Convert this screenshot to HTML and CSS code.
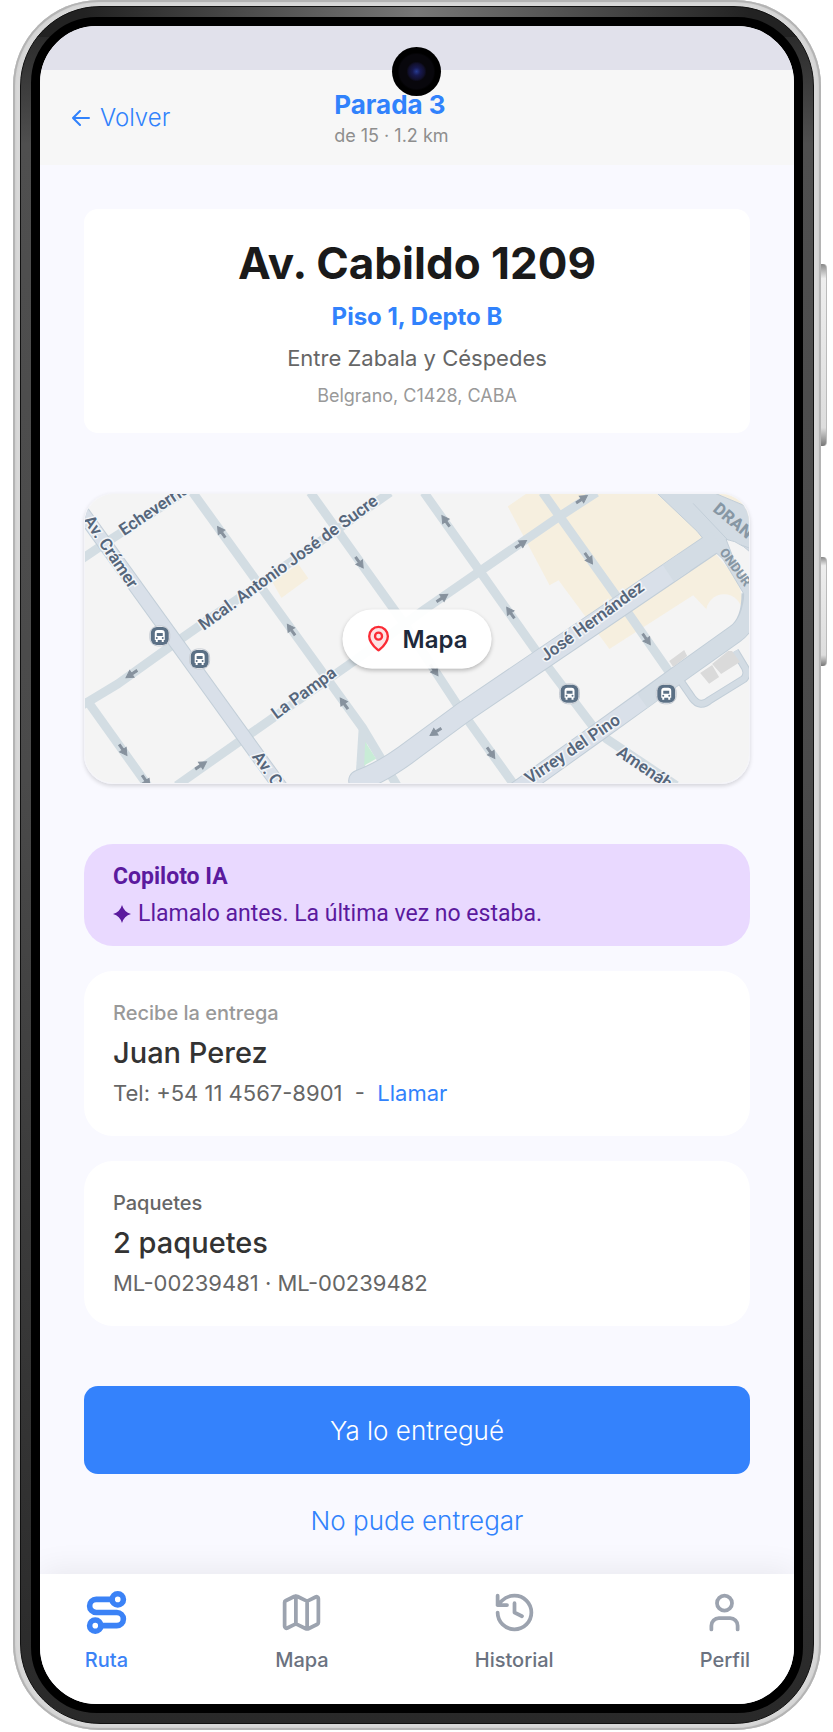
FILE: index.html
```html
<!DOCTYPE html>
<html lang="es">
<head>
    <meta charset="UTF-8">
    <meta name="viewport" content="width=device-width, initial-scale=1.0">
    <title>Parada 3</title>
    <link rel="stylesheet" href="styles.css">
</head>
<body>

    <div class="phone">
        <span class="side-button volume"></span>
        <span class="side-button power"></span>
        <div class="bezel">
            <div class="screen">
                <span class="camera"></span>
                <div class="status-bar"></div>

                <!-- Header -->
                <header class="header">
                    <a class="back" href="#">
                        <svg width="18" height="16" viewBox="0 0 18 16" fill="none" stroke="currentColor" stroke-width="2" stroke-linecap="round" stroke-linejoin="round"><path d="M17 8H1M8 1L1 8l7 7"/></svg>
                        Volver
                    </a>
                    <div>
                        <h1>Parada 3</h1>
                        <p>de 15 · 1.2 km</p>
                    </div>
                </header>

                <main class="content">
                    <!-- Address -->
                    <section class="address">
                        <h2>Av. Cabildo 1209</h2>
                        <p class="unit">Piso 1, Depto B</p>
                        <p class="between">Entre Zabala y Céspedes</p>
                        <p class="zone">Belgrano, C1428, CABA</p>
                    </section>

                    <!-- Map -->
                    <section class="map">
                        <svg class="map-art" viewBox="0 0 666 291" preserveAspectRatio="xMidYMid slice">
                            <defs>
                                <path id="arrow" d="M-6 -1H0V-4L7 0L0 4V1H-6Z" fill="#87929e" stroke="#87929e"/>
                                <g id="bus">
                                    <rect x="-10" y="-10" width="20" height="20" rx="8" fill="#fff" stroke="#c5cad1"/>
                                    <rect x="-9" y="-9" width="18" height="18" rx="6" fill="#5b7085"/>
                                    <path d="M-5 4V-3Q-5 -6 -2 -6H2Q5 -6 5 -3V4H4V6H2V4H-2V6H-4V4Z" fill="#fff"/>
                                    <path d="M-3 -3H3V0H-3Z" fill="#5b7085"/>
                                    <circle cx="-3" cy="2" r="1" fill="#5b7085"/>
                                    <circle cx="3" cy="2" r="1" fill="#5b7085"/>
                                </g>
                            </defs>
                            <rect width="666" height="291" fill="#f4f4f4"/>
                            <path fill="#f6efdf" d="M424 13L443 0H573L616 38L627 54L654 86L661 110L657 128L624 117L610 102L526 156L475 87L466 92Z"/>
                            <path fill="#f6efdf" d="M188 89L214 71L224 85L197 105ZM630 0H666V28Z"/>
                            <circle cx="641" cy="119" r="18" fill="#f4f4f4"/>

                            <!-- Minor streets -->
                            <g fill="none" stroke="#d3dde3" stroke-width="9" stroke-linejoin="round">
                                <path d="M-5 67L23 48L99 -1"/>
                                <path d="M-4 213L3 209L33 191L96 146L306 -1"/>
                                <path d="M3 209L63 293"/>
                                <path d="M108 -1L279 236L313 293"/>
                                <path d="M279 236L276 283"/>
                                <path d="M226 -1L319 129L376 216L431 293"/>
                                <path d="M92 293L163 243L273 166L341 116L396 78L476 23L513 -1"/>
                                <path d="M340 -1L396 78L456 163L509 233L523 246L593 293"/>
                                <path d="M459 -1L476 23L533 103L588 182"/>
                            </g>

                            <!-- Avenues -->
                            <g fill="none" stroke="#c2ced8" stroke-linejoin="round">
                                <path stroke-width="15" d="M-10 9L205 307"/>
                                <path stroke-width="22" stroke-linecap="round" d="M275 288Q300 279 330 256L379 220L640 43"/>
                                <path stroke-width="19" d="M426 303L514 240L593 183L652 141Q668 130 668 100"/>
                                <path stroke-width="8" d="M596 186L609 205Q617 216 627 207L661 186Q666 180 661 173L652 158"/>
                            </g>
                            <path fill="#d3dce4" stroke="#c2ced8" d="M573 -1L614 38L627 54L640 66L661 101V115L680 128V60L643 46L680 64V20L630 -1Z"/>
                            <g fill="none" stroke="#d9e0e9" stroke-linejoin="round">
                                <path stroke-width="13" d="M-10 9L205 307"/>
                                <path stroke-width="20" stroke-linecap="round" d="M275 288Q300 279 330 256L379 220L600 70"/>
                                <path stroke-width="17" d="M426 303L514 240L560 207"/>
                                <path stroke-width="17" stroke="#d3dce4" d="M559 208L593 183L652 141Q668 130 670 100"/>
                                <path stroke-width="20" stroke="#d3dce4" d="M585 80L634 47"/>
                                <path stroke-width="6" stroke="#d3dce4" d="M596 186L609 205Q617 216 627 207L661 186Q666 180 661 173L652 158"/>
                            </g>
                            <g fill="#dadada">
                                <path d="M586 168L601 157L604 163L590 174ZM617 180L629 172L636 184L626 191ZM629 171L645 158H649L657 169L638 181Z"/>
                            </g>
                            <path fill="#f4f4f4" stroke="#c2ced8" d="M643 46Q660 48 680 72V90H660L659 84Q650 66 643 46Z"/>
                            <path fill="none" stroke="#c2ced8" d="M610 10L645 47"/>
                            <path fill="#c8ecd6" d="M281 249L292 266L280 273Z"/>

                            <!-- Traffic direction -->
                            <use href="#arrow" transform="translate(137 39) rotate(-125)"/>
                            <use href="#arrow" transform="translate(207 137) rotate(-125)"/>
                            <use href="#arrow" transform="translate(260 211) rotate(-125)"/>
                            <use href="#arrow" transform="translate(275 69) rotate(55)"/>
                            <use href="#arrow" transform="translate(47 181) rotate(147)"/>
                            <use href="#arrow" transform="translate(38 257) rotate(55)"/>
                            <use href="#arrow" transform="translate(61 288) rotate(55)"/>
                            <use href="#arrow" transform="translate(116 273) rotate(-33)"/>
                            <use href="#arrow" transform="translate(362 28) rotate(-125)"/>
                            <use href="#arrow" transform="translate(427 120) rotate(-125)"/>
                            <use href="#arrow" transform="translate(437 51) rotate(-33)"/>
                            <use href="#arrow" transform="translate(498 6) rotate(-33)"/>
                            <use href="#arrow" transform="translate(358 105) rotate(-33)"/>
                            <use href="#arrow" transform="translate(505 65) rotate(55)"/>
                            <use href="#arrow" transform="translate(563 146) rotate(55)"/>
                            <use href="#arrow" transform="translate(350 177) rotate(55)"/>
                            <use href="#arrow" transform="translate(407 260) rotate(55)"/>
                            <use href="#arrow" transform="translate(352 239) rotate(147)"/>

                            <!-- Street names -->
                            <g class="street">
                                <text transform="translate(39 43) rotate(-34)">Echeverría</text>
                                <text transform="translate(-2 27) rotate(56)">Av. Crámer</text>
                                <text transform="translate(119 138) rotate(-36)">Mcal. Antonio José de Sucre</text>
                                <text transform="translate(192 227) rotate(-36)">La Pampa</text>
                                <text transform="translate(167 264) rotate(54)">Av. Crámer</text>
                                <text transform="translate(462 169) rotate(-36)">José Hernández</text>
                                <text transform="translate(446 292) rotate(-34)">Virrey del Pino</text>
                                <text transform="translate(532 262) rotate(34)">Amenábar</text>
                            </g>
                            <g class="rail">
                                <text transform="translate(629 17) rotate(40)">DRAN</text>
                                <text class="small" transform="translate(636 59) rotate(54)">ONDUR</text>
                            </g>

                            <use href="#bus" transform="translate(75 143)"/>
                            <use href="#bus" transform="translate(115 166)"/>
                            <use href="#bus" transform="translate(486 201)"/>
                            <use href="#bus" transform="translate(583 201)"/>
                        </svg>
                        <button type="button" class="map-button">
                            <svg width="28" height="28" viewBox="0 0 24 24" fill="#fde3e5" stroke="#fb2c36" stroke-width="2" stroke-linecap="round" stroke-linejoin="round"><path d="M20 10c0 5-5.500 10.200-7.400 11.800a1 1 0 0 1-1.200 0C9.500 20.200 4 15 4 10a8 8 0 0 1 16 0"/><circle cx="12" cy="10" r="3"/></svg>
                            Mapa
                        </button>
                    </section>

                    <!-- Delivery details -->
                    <div class="details">
                        <section class="copilot">
                            <h3>Copiloto IA</h3>
                            <p>
                                <svg width="18" height="18" viewBox="0 0 18 18" fill="currentColor"><path d="M9 0Q11 7 18 9Q11 11 9 18Q7 11 0 9Q7 7 9 0Z"/></svg>
                                Llamalo antes. La última vez no estaba.
                            </p>
                        </section>
                        <section class="card">
                            <h3 class="light">Recibe la entrega</h3>
                            <p class="main">Juan Perez</p>
                            <p class="sub">Tel: +54 11 4567-8901 &nbsp;-&nbsp; <a href="tel:+541145678901">Llamar</a></p>
                        </section>
                        <section class="card">
                            <h3>Paquetes</h3>
                            <p class="main">2 paquetes</p>
                            <p class="sub">ML-00239481 · ML-00239482</p>
                        </section>
                    </div>

                    <!-- Actions -->
                    <div class="actions">
                        <button type="button" class="delivered">Ya lo entregué</button>
                        <button type="button" class="failed">No pude entregar</button>
                    </div>
                </main>

                <!-- Bottom navigation -->
                <nav class="tabs">
                    <a class="active" href="#">
                        <svg viewBox="0 0 24 24"><circle cx="6" cy="19" r="3"/><path d="M9 19h8.500a3.500 3.500 0 0 0 0-7h-11a3.500 3.500 0 0 1 0-7H15"/><circle cx="18" cy="5" r="3"/></svg>
                        Ruta
                    </a>
                    <a href="#">
                        <svg viewBox="0 0 24 24"><path d="M14.100 5.550a2 2 0 0 0 1.800 0l3.650-1.830A1 1 0 0 1 21 4.620v12.760a1 1 0 0 1-.55.9l-4.550 2.270a2 2 0 0 1-1.800 0l-4.200-2.100a2 2 0 0 0-1.800 0l-3.650 1.830A1 1 0 0 1 3 19.380V6.620a1 1 0 0 1 .55-.9L8.100 3.450a2 2 0 0 1 1.800 0zM15 5.760v15M9 3.240v15"/></svg>
                        Mapa
                    </a>
                    <a href="#">
                        <svg viewBox="0 0 24 24"><path d="M3 12a9 9 0 1 0 9-9 9.750 9.750 0 0 0-6.740 2.740L3 8M3 3v5h5M12 7v5l4 2"/></svg>
                        Historial
                    </a>
                    <a href="#">
                        <svg viewBox="0 0 24 24"><path d="M19 21v-2a4 4 0 0 0-4-4H9a4 4 0 0 0-4 4v2"/><circle cx="12" cy="7" r="4"/></svg>
                        Perfil
                    </a>
                </nav>
            </div>
        </div>
    </div>

</body>
</html>
```

FILE: styles.css
```css
* {
    box-sizing: border-box;
}

body {
    font-family: Inter, "Liberation Sans", sans-serif;
    background-color: white;
    margin: 0;
    padding: 0 12px 0 13px;
}

h1, h2, h3, p {
    margin: 0;
}

a {
    color: #3182fc;
    text-decoration: none;
}

button {
    font-family: inherit;
    border: none;
    cursor: pointer;
}

/* Phone frame */
.phone {
    position: relative;
    padding: 6px 7px;
    border-radius: 86px;
    background-color: #d8d8d8;
    box-shadow: inset 0 0 0 2px #b4b4b4, inset 0 0 2px 3px #cfcfcf;
}

.bezel {
    padding: 10px;
    border-radius: 80px;
    border: 1px solid #111;
    background: linear-gradient(90deg, #222 8%, #777 50%, #222 92%) top / 100% 30px no-repeat, linear-gradient(#222, #4f4f4f 8%, #4a4a4a 45%, #292929);
}

.side-button {
    position: absolute;
    right: -6px;
    width: 6px;
    border-radius: 0 4px 4px 0;
    background: linear-gradient(#888, #eee 8%, #ddd 90%, #777);
    border-right: 1px solid #bbb;
}

.volume {
    top: 264px;
    height: 182px;
}

.power {
    top: 557px;
    height: 109px;
}

.screen {
    position: relative;
    border: 9px solid black;
    border-radius: 66px;
    overflow: hidden;
    background-color: #f9f9ff;
}

.camera {
    position: absolute;
    top: 21px;
    left: calc(50% - 25px);
    width: 49px;
    height: 49px;
    border-radius: 50%;
    background: radial-gradient(circle, #263a91 0, #17194f 4px, #11102d 8px, #08070c 10px, #08070c 17px, black 19px);
}

.status-bar {
    height: 44px;
    background-color: #e1e1eb;
}

/* Header */
.header {
    display: grid;
    grid-template-columns: 38% 1fr;
    align-items: center;
    height: 95px;
    padding: 0 32px;
    background-color: #f7f7f7;
}

.back {
    display: flex;
    align-items: center;
    gap: 10px;
    font-size: 24px;
    font-weight: 300;
}

.header h1 {
    font-size: 26px;
    line-height: 36px;
    font-weight: 700;
    color: #3182fc;
}

.header p {
    font-size: 18px;
    line-height: 26px;
    color: #8e8e8e;
}

/* Content */
.content {
    display: flex;
    flex-direction: column;
    gap: 60px;
    padding: 44px 44px 24px;
}

.address {
    display: flex;
    flex-direction: column;
    align-items: center;
    gap: 8px;
    padding: 26px 24px 22px;
    border-radius: 14px;
    background-color: white;
    text-align: center;
}

.address h2 {
    font-size: 44px;
    line-height: 56px;
    font-weight: 700;
    color: #1a1a1a;
}

.unit {
    font-size: 24px;
    line-height: 36px;
    font-weight: 700;
    color: #3182fc;
}

.between {
    font-size: 22px;
    line-height: 30px;
    color: #666;
}

.zone {
    font-size: 18px;
    line-height: 30px;
    color: #999;
}

/* Map */
.map {
    position: relative;
    height: 291px;
    border: 1px solid #f4f4f8;
    border-radius: 29px;
    overflow: hidden;
    box-shadow: 0 2px 4px rgba(0, 0, 0, 0.15);
}

.map-art {
    display: block;
    width: 100%;
    height: 100%;
}

.street {
    font-family: Roboto, sans-serif;
    font-size: 17px;
    font-weight: 600;
    fill: #56667b;
    stroke: #f2f5f8;
    stroke-width: 3px;
    paint-order: stroke;
}

.rail {
    font-family: Roboto, sans-serif;
    font-size: 17px;
    font-weight: 800;
    fill: #8797a4;
}

.rail .small {
    font-size: 13px;
}

.map-button {
    position: absolute;
    top: 50%;
    left: 50%;
    transform: translate(-50%, -50%);
    display: flex;
    align-items: center;
    gap: 10px;
    padding: 14px 24px 14px 22px;
    border-radius: 30px;
    background-color: rgba(255, 255, 255, 0.95);
    box-shadow: 0 2px 4px rgba(0, 0, 0, 0.25);
    font-size: 24px;
    line-height: 31px;
    font-weight: 600;
    color: #1e293b;
}

/* Details */
.details {
    display: flex;
    flex-direction: column;
    gap: 25px;
}

.copilot {
    padding: 14px 29px;
    border-radius: 29px;
    background-color: #e9d9ff;
    color: #5b1a9e;
    font-family: Roboto, sans-serif;
    font-size: 23px;
    line-height: 37px;
}

.copilot h3 {
    font-size: 23px;
    font-weight: 700;
}

.copilot p {
    display: flex;
    align-items: center;
    gap: 7px;
}

.card {
    padding: 24px 29px 23px;
    border-radius: 29px;
    background-color: white;
}

.card h3 {
    font-size: 20px;
    line-height: 37px;
    font-weight: 500;
    color: #666;
}

.card .light {
    color: #999;
}

.card .main {
    font-size: 29px;
    line-height: 41px;
    font-weight: 500;
    color: #333;
}

.card .sub {
    font-size: 22px;
    line-height: 40px;
    color: #666;
}

/* Actions */
.actions {
    display: flex;
    flex-direction: column;
    gap: 16px;
}

.delivered {
    height: 88px;
    border-radius: 14px;
    background-color: #3482fc;
    color: white;
    font-size: 26px;
    font-weight: 300;
}

.failed {
    height: 60px;
    background: none;
    color: #3182fc;
    font-size: 26px;
    font-weight: 300;
}

/* Bottom navigation */
.tabs {
    display: flex;
    justify-content: space-between;
    height: 130px;
    padding: 16px 44px;
    background-color: white;
    box-shadow: 0 -4px 30px rgba(0, 0, 0, 0.07);
}

.tabs a {
    display: flex;
    flex-direction: column;
    align-items: center;
    gap: 10px;
    font-size: 20px;
    line-height: 30px;
    font-weight: 500;
    color: #6b7280;
}

.tabs svg {
    width: 45px;
    height: 45px;
    fill: none;
    stroke: #9ca3af;
    stroke-width: 2px;
    stroke-linecap: round;
    stroke-linejoin: round;
}

.tabs .active {
    color: #3b82f6;
}

.tabs .active svg {
    stroke: #3b82f6;
    stroke-width: 3px;
}
```
